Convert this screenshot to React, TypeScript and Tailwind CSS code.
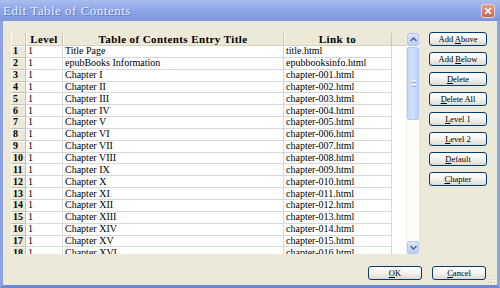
import React from 'react';

const ROMAN = ['I', 'II', 'III', 'IV', 'V', 'VI', 'VII', 'VIII', 'IX', 'X', 'XI', 'XII', 'XIII', 'XIV', 'XV', 'XVI'];

const rows = [
  { title: 'Title Page', link: 'title.html' },
  { title: 'epubBooks Information', link: 'epubbooksinfo.html' },
  ...ROMAN.map((r, i) => ({
    title: `Chapter ${r}`,
    link: `chapter-${String(i + 1).padStart(3, '0')}.html`,
  })),
];

const serif = "font-['Liberation_Serif',_'Times_New_Roman',_serif]";

// XP style push button; key = index of the underlined letter
const XpButton = ({ label, keyIndex, width }: { label: string; keyIndex: number; width: string }) => (
  <button
    className={`${width} h-[14px] shrink-0 rounded-[3px] border border-[#003C74] bg-gradient-to-b from-[#FFFFFF] via-[#F4F3EE] to-[#DCDAD0] text-[8.5px] leading-none text-black ${serif} flex items-center justify-center`}
  >
    <span>
      {label.slice(0, keyIndex)}
      <u className="underline-offset-1">{label[keyIndex]}</u>
      {label.slice(keyIndex + 1)}
    </span>
  </button>
);

const Chevron = ({ down }: { down?: boolean }) => (
  <svg width="7" height="5" viewBox="0 0 7 5">
    <path
      d={down ? 'M0.5 1 L3.5 4 L6.5 1' : 'M0.5 4 L3.5 1 L6.5 4'}
      fill="none"
      stroke="#4D6185"
      strokeWidth="1.5"
    />
  </svg>
);

const Scrollbar = () => (
  <div className="w-[13px] h-full flex flex-col bg-[#FCFCF8] border-l border-[#EEEDE5]">
    <div className="h-[13px] shrink-0 rounded-[2px] border border-[#B5C8F4] bg-gradient-to-b from-[#DCE6FD] to-[#BBCEFA] flex items-center justify-center">
      <Chevron />
    </div>
    <div className="mt-px h-[73px] shrink-0 rounded-[2px] border border-[#B5C8F4] bg-gradient-to-r from-[#C7D7FC] via-[#D2DFFD] to-[#BDD0FA] flex flex-col items-center justify-center gap-px">
      <div className="w-[5px] h-px bg-[#EEF3FF]" />
      <div className="w-[5px] h-px bg-[#9AB1E6]" />
      <div className="w-[5px] h-px bg-[#EEF3FF]" />
      <div className="w-[5px] h-px bg-[#9AB1E6]" />
    </div>
    <div className="flex-1" />
    <div className="h-[13px] shrink-0 rounded-[2px] border border-[#B5C8F4] bg-gradient-to-b from-[#DCE6FD] to-[#BBCEFA] flex items-center justify-center">
      <Chevron down />
    </div>
  </div>
);

const HeaderCell = ({ width, children }: { width: string; children?: React.ReactNode }) => (
  <div className={`${width} shrink-0 h-full flex items-center justify-center border-r border-[#C7C5B2] shadow-[inset_1px_0_0_#FFFFFF]`}>
    {children}
  </div>
);

const TocTable = () => (
  <div className={`w-[395px] h-full flex flex-col overflow-hidden bg-white ${serif} text-black`}>
    {/* header */}
    <div className="h-[13px] shrink-0 flex bg-[#ECE9D8] border-b border-[#D6D2C2] text-[11px] font-bold leading-none tracking-[0.4px]">
      <HeaderCell width="w-[15px]" />
      <HeaderCell width="w-[37px]">Level</HeaderCell>
      <HeaderCell width="w-[221px]">Table of Contents Entry Title</HeaderCell>
      <HeaderCell width="w-[108px]">Link to</HeaderCell>
      <div className="flex-1" />
    </div>
    {rows.map((row, i) => (
      <div key={i} className="h-[11.85px] shrink-0 flex text-[10px] leading-none">
        <div className="w-[15px] shrink-0 bg-[#ECE9D8] border-r border-b border-[#C7C5B2] shadow-[inset_1px_1px_0_#FFFFFF] flex items-center pl-[2px] font-bold">
          {i + 1}
        </div>
        <div className="w-[37px] shrink-0 border-r border-b border-[#D8D8D8] flex items-center pl-[2px]">1</div>
        <div className="w-[221px] shrink-0 border-r border-b border-[#D8D8D8] flex items-center pl-[2px] whitespace-nowrap">
          {row.title}
        </div>
        <div className="w-[108px] shrink-0 border-r border-b border-[#D8D8D8] flex items-center pl-[2px] whitespace-nowrap">
          {row.link}
        </div>
        <div className="flex-1" />
      </div>
    ))}
  </div>
);

const sideButtons: [string, number][] = [
  ['Add Above', 4],
  ['Add Below', 4],
  ['Delete', 0],
  ['Delete All', 0],
  ['Level 1', 0],
  ['Level 2', 0],
  ['Default', 0],
  ['Chapter', 0],
];

export default function App() {
  return (
    <div className="w-[500px] h-[288px] flex flex-col overflow-hidden bg-[#ECE9D8]">
      {/* Title bar */}
      <div className="h-[21px] shrink-0 flex items-center justify-between pl-[3px] pr-[5px] bg-gradient-to-b from-[#A9BDEF] via-[#8CA5E6] to-[#7C96DE]">
        <span className={`${serif} text-[13px] leading-none tracking-[0.5px] text-[#E6EDFB] [text-shadow:1px_1px_0_#6078C8]`}>
          Edit Table of Contents
        </span>
        <div className="w-[14px] h-[14px] rounded-[3px] border border-[#F2D2CC] bg-gradient-to-b from-[#E79C88] to-[#C85F55] flex items-center justify-center">
          <svg width="8" height="8" viewBox="0 0 8 8">
            <path d="M1 1 L7 7 M7 1 L1 7" stroke="#FFFFFF" strokeWidth="1.6" />
          </svg>
        </div>
      </div>

      {/* Body */}
      <div className="relative flex-1 flex flex-col border-x-[3px] border-b-[3px] border-x-[#8FA3E2] border-b-[#6F87D8] pt-[12px] px-[8px]">
        <div className="h-[221px] shrink-0 flex gap-[10px]">
          <div className="w-[408px] h-full flex">
            <TocTable />
            <Scrollbar />
          </div>
          <div className="-mt-px flex flex-col gap-[6px]">
            {sideButtons.map(([label, k]) => (
              <XpButton key={label} label={label} keyIndex={k} width="w-[58px]" />
            ))}
          </div>
        </div>

        <div className="mt-[12px] flex justify-end gap-[10px] pr-[3px]">
          <XpButton label="OK" keyIndex={0} width="w-[54px]" />
          <XpButton label="Cancel" keyIndex={0} width="w-[54px]" />
        </div>

        {/* size grip */}
        <svg className="absolute right-[1px] bottom-[1px]" width="10" height="10" viewBox="0 0 10 10">
          {[
            [8, 2], [5, 5], [8, 5], [2, 8], [5, 8], [8, 8],
          ].map(([x, y], i) => (
            <g key={i}>
              <rect x={x} y={y} width="1" height="1" fill="#C3BFA9" />
              <rect x={x + 1} y={y + 1} width="1" height="1" fill="#FFFFFF" />
            </g>
          ))}
        </svg>
      </div>
    </div>
  );
}
